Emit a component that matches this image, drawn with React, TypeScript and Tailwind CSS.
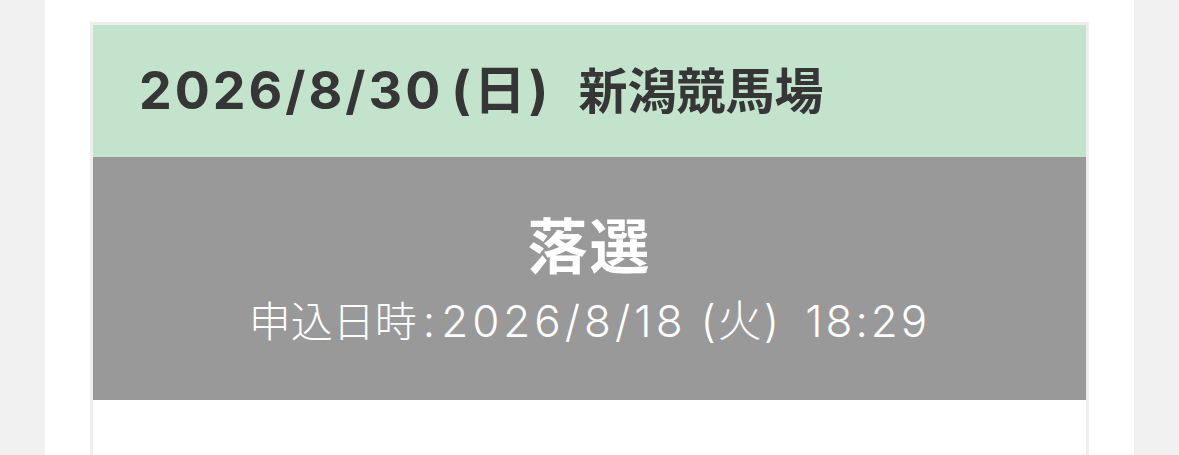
import React from 'react';

const fontStack = { fontFamily: 'Inter, "Noto Sans CJK JP", sans-serif' };

const ResultCard = () => {
    return (
        <div className="border-[3px] border-[#eeeeee] bg-white">
            <div className="h-[132px] bg-[#c4e3cc] flex items-center pl-[46px]">
                <h2 className="flex items-baseline text-[52px] font-bold leading-none text-[#363636]">
                    <span className="tracking-[3px]">2026/8/30</span>
                    <span className="ml-[8px] tracking-[3px]">(日)</span>
                    <span className="ml-[27px] text-[49px]">新潟競馬場</span>
                </h2>
            </div>
            <div className="h-[243px] bg-[#999999] flex flex-col items-center pt-[60px] text-white">
                <p className="text-[60px] font-bold leading-none tracking-[2px]">落選</p>
                <p className="mt-[22px] flex items-baseline text-[44px] font-light leading-none">
                    <span className="text-[42px]">申込日時</span>
                    <span className="mx-[6px]">:</span>
                    <span className="tracking-[4px]">2026/8/18</span>
                    <span className="ml-[14px] tracking-[2px]">(火)</span>
                    <span className="ml-[24px] tracking-[3px]">18:29</span>
                </p>
            </div>
            <div className="h-[120px] bg-white" />
        </div>
    );
};

const App = () => {
    return (
        <div className="min-h-screen bg-[#f1f1f1]" style={fontStack}>
            <div className="mx-[45px] min-h-screen bg-white px-[45px] pt-[22px]">
                <ResultCard />
            </div>
        </div>
    );
};

export default App;
